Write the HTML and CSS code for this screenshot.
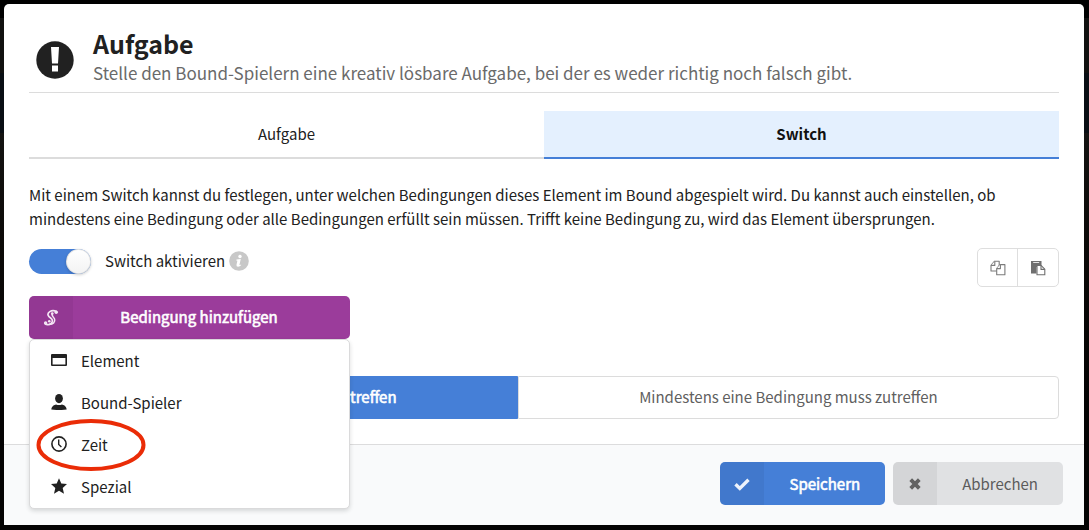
FILE: index.html
```html
<!DOCTYPE html>
<html lang="de">
<head>
<meta charset="utf-8">
<meta name="viewport" content="width=device-width, initial-scale=1">
<title>Aufgabe</title>
<link rel="stylesheet" href="styles.css">
</head>
<body>
<main class="modal" role="dialog" aria-labelledby="title">
  <div class="content">
    <header class="header">
      <svg class="header-icon" viewBox="0 0 38 38" aria-hidden="true"><circle cx="19" cy="19" r="18.7" fill="#212121"/><path d="M15 6h8l-1 16.500h-6zM16 24.500h6v6h-6z" fill="#fff"/></svg>
      <div class="header-text">
        <h1 class="title" id="title">Aufgabe</h1>
        <p class="subtitle">Stelle den Bound-Spielern eine kreativ lösbare Aufgabe, bei der es weder richtig noch falsch gibt.</p>
      </div>
    </header>
    <div class="tabs" role="tablist">
      <button class="tab" type="button" role="tab" aria-selected="false">Aufgabe</button>
      <button class="tab tab-active" type="button" role="tab" aria-selected="true">Switch</button>
    </div>
    <p class="description">Mit einem Switch kannst du festlegen, unter welchen Bedingungen dieses Element im Bound abgespielt wird. Du kannst auch einstellen, ob mindestens eine Bedingung oder alle Bedingungen erfüllt sein müssen. Trifft keine Bedingung zu, wird das Element übersprungen.</p>
    <div class="controls">
      <div class="controls-left">
        <div class="switch-row">
          <input class="toggle" id="activate" type="checkbox" role="switch" checked>
          <label class="switch-label" for="activate">Switch aktivieren</label>
          <svg class="info" viewBox="0 0 20 20" aria-hidden="true"><circle cx="10" cy="10" r="9.800" fill="#c8c8c8"/><circle cx="11" cy="5.500" r="1.700" fill="#fff"/><path d="M7.500 8.500l4.300-.4-1.400 6q.8-.1 1.500-.7l.4.500q-1.400 1.800-3.300 1.800-1.900-.1-1.500-2l.9-3.900-1.200-.3z" fill="#fff"/></svg>
        </div>
        <div class="dropdown">
          <button class="button button-purple" type="button" aria-expanded="true">
            <span class="button-icon"><svg viewBox="0 0 16 18" width="16" height="18" aria-hidden="true"><path d="M13.500 2.600Q10 .6 6.800 2.600C3.600 4.800 5 7.200 7.600 9c3.200 2.300 1.800 5.500-1.300 6.400-2.200.5-4 .1-4.300-1" fill="none" stroke="#f3e5f3" stroke-width="1.700" stroke-linecap="round"/><path d="M9.500 4C7.600 6.200 10.800 8 11.600 10.200c.9 3-1.600 5-5.300 5.200" fill="none" stroke="#f3e5f3" stroke-width="1.500"/><circle cx="13.200" cy="3.300" r="1.700" fill="#f3e5f3"/><circle cx="9.300" cy="4.600" r="1.300" fill="#f3e5f3"/><circle cx="6.300" cy="12.200" r="1.300" fill="#f3e5f3"/><circle cx="2.600" cy="14" r="1.700" fill="#f3e5f3"/></svg></span>
            <span class="button-text">Bedingung hinzufügen</span>
          </button>
          <div class="menu" role="menu">
            <button class="item" type="button" role="menuitem"><svg class="item-icon" viewBox="0 0 16 16" aria-hidden="true"><path fill-rule="evenodd" d="M1 2h14q1 0 1 1v10q0 1-1 1H1q-1 0-1-1V3q0-1 1-1zm.6 4v6.400h12.800V6z"/></svg>Element</button>
            <button class="item" type="button" role="menuitem"><svg class="item-icon" viewBox="0 0 16 16" aria-hidden="true"><ellipse cx="8" cy="4.600" rx="3.900" ry="4.600"/><path d="M.3 15.600C.7 12 3.500 10.900 5 10.500q3 1 6 0c1.500.4 4.300 1.500 4.700 5.100Q8 16.500.3 15.600z"/></svg>Bound-Spieler</button>
            <button class="item" type="button" role="menuitem"><svg class="item-icon" viewBox="0 0 16 16" aria-hidden="true"><circle cx="8" cy="8" r="7.100" fill="none" stroke="#212121" stroke-width="1.600"/><path d="M7.700 3.500v5l2.700 2.600" fill="none" stroke="#212121" stroke-width="1.400"/></svg>Zeit<svg class="mark" viewBox="0 0 110 54" aria-hidden="true"><ellipse cx="55" cy="27" rx="52.500" ry="24" fill="none" stroke="#ea2c07" stroke-width="4"/></svg></button>
            <button class="item" type="button" role="menuitem"><svg class="item-icon" viewBox="0 0 16 16" aria-hidden="true"><path d="M8 .2l2.300 5.400 5.700.5-4.300 3.900 1.300 5.700L8 12.700l-5 3 1.300-5.700L0 6.100l5.700-.5z"/></svg>Spezial</button>
          </div>
        </div>
      </div>
      <div class="tools">
        <button class="tool" type="button" aria-label="Kopieren"><svg viewBox="0 0 16 16" width="16" height="16" aria-hidden="true"><g fill="#fff" stroke="#7b7b7b" stroke-width="1.100" stroke-linejoin="round"><path d="M4.600 1.200H9.200v9.800H1V5.400z"/><path d="M4.800 1.200v4.200H1"/><path d="M10 4.600h4.900v10.200H6.700V8.600z"/><path d="M10.400 4.600v4H6.700"/></g></svg></button>
        <button class="tool" type="button" aria-label="Einfügen"><svg viewBox="0 0 16 16" width="16" height="16" aria-hidden="true"><path d="M1 1h10.500v6H6.500v6.500H1z" fill="#6f6f6f"/><path d="M3.200 2.500h6" stroke="#e4e4e4"/><path d="M7 5.500h4.200l3.600 3.700v5.600H7z" fill="#fff" stroke="#6f6f6f" stroke-width="1.100"/><path d="M11 5.500V9.400h3.800" fill="none" stroke="#6f6f6f" stroke-width="1.100"/></svg></button>
      </div>
    </div>
    <div class="modes" role="radiogroup" aria-label="Bedingungen">
      <label class="mode"><input class="mode-input" type="radio" name="mode" checked><span>Alle Bedingungen müssen zutreffen</span></label>
      <label class="mode"><input class="mode-input" type="radio" name="mode"><span>Mindestens eine Bedingung muss zutreffen</span></label>
    </div>
  </div>
  <footer class="footer">
    <button class="button button-blue" type="button"><span class="button-icon"><svg viewBox="0 0 16 16" width="16" height="16" aria-hidden="true"><path d="M1.500 8.200l4.300 4.200 8.700-8.600" fill="none" stroke="#edf3fc" stroke-width="3.400"/></svg></span><span class="button-text">Speichern</span></button>
    <button class="button button-gray" type="button"><span class="button-icon"><svg viewBox="0 0 16 16" width="16" height="16" aria-hidden="true"><path d="M3.700 3.700l8.600 8.600M12.300 3.700l-8.600 8.600" stroke="#626262" stroke-width="3.800"/></svg></span><span class="button-text">Abbrechen</span></button>
  </footer>
</main>
</body>
</html>
```
FILE: styles.css
```css
* { box-sizing: border-box; }
body {
  margin: 0;
  padding: 4px 5px 5px 4px;
  color: #212121;
  background: linear-gradient(#000 18px, #111110 18px, #111110 73px, #090e14 73px, #090e14 133px, #141312 133px, #0c0a08 240px, #040303 400px);
  font: 15px/24px "Noto Sans CJK SC", "Noto Sans", sans-serif;
}
button { font: inherit; color: inherit; border: 0; padding: 0; background: none; cursor: pointer; }
svg { display: block; }
h1, p { margin: 0; }
.modal { background: #fff; border-radius: 5px 5px 0 0; }
.content { padding: 21px 25px 25px; }
.header { display: flex; align-items: center; gap: 19px; height: 68px; padding-left: 7px; border-bottom: 1px solid #dcdcdc; }
.header-icon { width: 38px; height: 38px; margin-top: 3px; flex: none; }
.header-text { padding-bottom: 4px; }
.title { font-size: 25px; line-height: 33px; font-weight: 700; }
.subtitle { font-size: 17px; line-height: 26px; color: #6a6a6a; }
.tabs { display: flex; margin-top: 18px; }
.tab { flex: 1; height: 48px; border-bottom: 2px solid #dcdcdc; }
.tab-active { background: #e4f0fe; border-bottom-color: #457fd7; font-weight: 700; color: #111; }
.description { margin-top: 24px; }
.controls { display: flex; justify-content: space-between; align-items: flex-start; margin-top: 17px; }
.switch-row { display: flex; align-items: center; height: 26px; }
.toggle { appearance: none; margin: 0 14px 0 0; width: 62px; height: 25px; border-radius: 13px; background: #457fd7; cursor: pointer; }
.toggle::before { content: ""; display: block; width: 25px; height: 25px; border-radius: 50%; background: linear-gradient(#fff, #f3f3f3); box-shadow: 0 1px 3px rgba(0, 0, 0, .2), 0 0 0 1px rgba(0, 0, 0, .1) inset; }
.toggle:checked::before { margin-left: auto; }
.info { width: 20px; height: 20px; margin-left: 4px; }
.dropdown { position: relative; width: 321px; margin-top: 22px; }
.button { display: flex; height: 43px; border-radius: 5px; overflow: hidden; -webkit-text-stroke: .6px currentColor; }
.button-icon { display: flex; align-items: center; justify-content: center; width: 44px; height: 100%; background: rgba(0, 0, 0, .05); }
.button-text { flex: 1; align-self: center; padding: 0 25px; }
.button-purple { width: 100%; color: #fff; background: #9b3c9b; }
.button-purple .button-text { padding: 0 50px 2px 25px; }
.button-blue { color: #fff; background: #457fd7; }
.button-gray { color: #5b5b5b; background: #e0e1e3; -webkit-text-stroke: 0; }
.menu { position: absolute; z-index: 1; top: 100%; left: 0; width: 100%; background: #fff; border: 1px solid #dadadb; border-radius: 5px; box-shadow: 0 2px 4px rgba(34, 36, 38, .16); }
.item { position: relative; display: flex; align-items: center; width: 100%; height: 42px; padding-left: 21px; }
.item-icon { width: 16px; height: 16px; margin: 0 14px 2px 0; fill: #212121; }
.mark { position: absolute; left: 6px; top: -6px; width: 110px; height: 54px; }
.tools { display: flex; border: 1px solid #dedede; border-radius: 5px; }
.tool { display: flex; align-items: center; justify-content: center; width: 39px; height: 37px; }
.tool + .tool { width: 41px; border-left: 1px solid #dedede; }
.modes { display: flex; margin-top: 37px; }
.mode { display: flex; align-items: center; justify-content: center; flex: 1 1 auto; height: 43px; padding-bottom: 2px; border: 1px solid #dcdcdc; border-radius: 0 4px 4px 0; color: #606060; cursor: pointer; }
.mode:has(:checked) { background: #457fd7; border-color: #457fd7; border-radius: 4px 0 0 4px; color: #fff; -webkit-text-stroke: .6px currentColor; }
.mode-input { position: absolute; opacity: 0; pointer-events: none; }
.footer { display: flex; justify-content: flex-end; gap: 8px; padding: 17px 21px 20px; background: #f9fafb; border-top: 1px solid #dcdcdd; }
```
